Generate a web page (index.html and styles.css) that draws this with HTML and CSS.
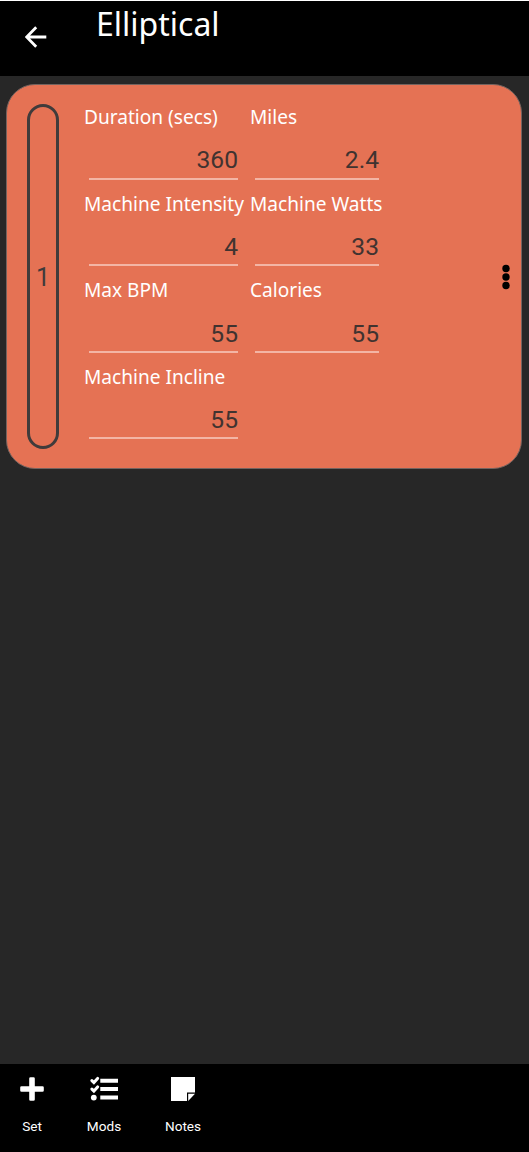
FILE: index.html
```html
<!DOCTYPE html>
<html lang="en">
<head>
<meta charset="utf-8">
<title>Elliptical</title>
<link rel="stylesheet" href="styles.css">
</head>
<body>
<div class="app">
  <header class="header">
    <svg class="back" viewBox="0 0 22 22" width="22" height="22"><path d="M21.3 11H2M11.2 1.2L1.6 11l9.6 9.8" fill="none" stroke="#fff" stroke-width="2.8"/></svg>
    <h1 class="title">Elliptical</h1>
  </header>
  <main class="content">
    <section class="card">
      <div class="index">1</div>
      <div class="fields">
        <div class="field"><span class="label">Duration (secs)</span><span class="value">360</span></div>
        <div class="field"><span class="label">Miles</span><span class="value">2.4</span></div>
        <div class="field"><span class="label">Machine Intensity</span><span class="value">4</span></div>
        <div class="field"><span class="label">Machine Watts</span><span class="value">33</span></div>
        <div class="field"><span class="label">Max BPM</span><span class="value">55</span></div>
        <div class="field"><span class="label">Calories</span><span class="value">55</span></div>
        <div class="field"><span class="label">Machine Incline</span><span class="value">55</span></div>
      </div>
      <svg class="more" viewBox="0 0 8 26" width="8" height="26"><circle cx="4" cy="4.5" r="3.7"/><circle cx="4" cy="13" r="3.7"/><circle cx="4" cy="21.5" r="3.7"/></svg>
    </section>
  </main>
  <nav class="toolbar">
    <div class="tool tool-set">
      <svg viewBox="0 0 28 28" width="28" height="28"><path d="M11.2 3.5q0-1.3 1.3-1.3h3q1.3 0 1.3 1.3v7.7h7.7q1.3 0 1.3 1.3v3q0 1.3-1.3 1.3h-7.7v7.7q0 1.3-1.3 1.3h-3q-1.3 0-1.3-1.3v-7.7H3.5q-1.3 0-1.3-1.3v-3q0-1.3 1.3-1.3h7.7z" fill="#fff"/></svg>
      <span>Set</span>
    </div>
    <div class="tool tool-mods">
      <svg viewBox="0 0 28 28" width="28" height="28"><g fill="none" stroke="#fff"><path d="M1.9 5.6l2 2L7.6 3.4M1.9 14.1l2 2 3.7-4.2" stroke-width="3" stroke-linecap="round"/><path d="M10.3 5.7H28M10.3 14H28M10.3 22.6H28" stroke-width="4"/></g><circle cx="3.8" cy="22.6" r="2.9" fill="#fff"/></svg>
      <span>Mods</span>
    </div>
    <div class="tool tool-notes">
      <svg viewBox="0 0 28 28" width="28" height="28"><path d="M2 2h24v15.5h-8V26H2z" fill="#fff"/><path d="M19.2 18.8H26L19.2 26z" fill="#fff"/></svg>
      <span>Notes</span>
    </div>
  </nav>
</div>
</body>
</html>
```
FILE: styles.css
```css
* { box-sizing: border-box; }
body { margin: 0; background: #272727; }
.app {
  height: 1152px;
  display: flex;
  flex-direction: column;
  border-top: 1px solid #fff;
  font-family: "Noto Sans", sans-serif;
  color: #fff;
}
.header {
  height: 75px;
  flex: none;
  display: flex;
  align-items: flex-start;
  background: #000;
}
.back { margin: 25px 0 0 25px; }
.title {
  margin: 0 0 0 49px;
  font-size: 32px;
  font-weight: 400;
  line-height: 45px;
}
.content { flex: 1; padding: 8px 6px 0; }
.card {
  width: 516.4px;
  height: 385px;
  display: flex;
  background: #e57254;
  border: 1px solid #74635f;
  border-radius: 29px;
  padding: 19px 0 19px 20px;
}
.index {
  width: 32px;
  border: 3px solid #403b3b;
  border-radius: 16px;
  display: flex;
  align-items: center;
  justify-content: center;
  padding-top: 2px;
  font: 25px Roboto, sans-serif;
  color: #403b3b;
}
.fields {
  display: grid;
  grid-template-columns: 166px 141px;
  grid-auto-rows: 86.6px;
  margin-left: 25px;
  width: 410px;
}
.field { display: flex; flex-direction: column; align-items: stretch; }
.label {
  font-size: 19.1px;
  line-height: 26px;
  white-space: nowrap;
}
.value {
  height: 49.6px;
  margin: 0 12px 0 5px;
  border-bottom: 2px solid #f3b5a5;
  font: 24.6px/27px Roboto, sans-serif;
  padding-top: 16.4px;
  text-align: right;
  color: #403330;
}
.more { margin-left: 8px; align-self: center; }
.toolbar {
  height: 88px;
  flex: none;
  display: flex;
  background: #000;
  font: 13.6px/16px Roboto, sans-serif;
}
.tool {
  display: flex;
  flex-direction: column;
  align-items: center;
  padding-top: 11px;
  gap: 15px;
}
.tool-set { width: 64px; }
.tool-mods { width: 80px; }
.tool-notes { width: 78px; }
```
